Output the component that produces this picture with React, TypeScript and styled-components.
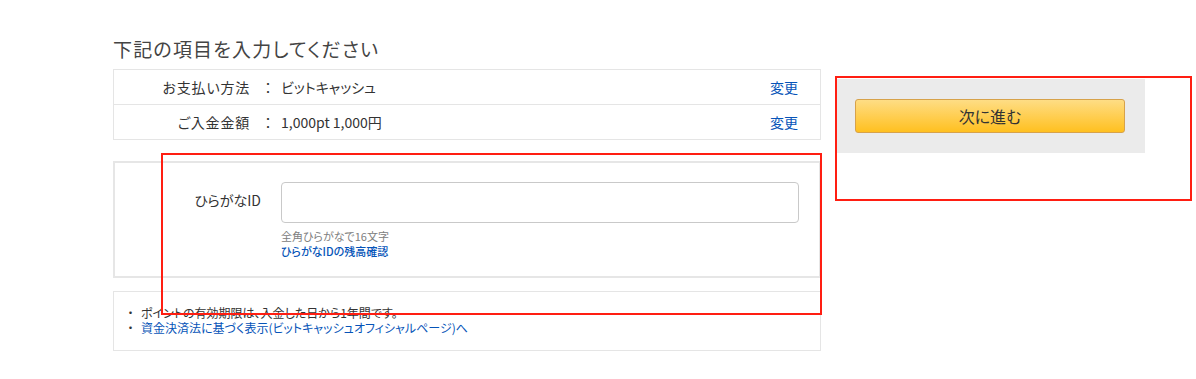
import React from "react";
import styled, { createGlobalStyle } from "styled-components";

const GlobalStyle = createGlobalStyle`
  html, body { margin: 0; padding: 0; background: #fff; }
  body {
    font-family: "Noto Sans CJK JP", "Noto Sans", sans-serif;
    font-feature-settings: "palt";
    color: #333;
  }
`;

const Page = styled.div`
  position: relative;
  width: 1196px;
  height: 379px;
  padding: 37px 0 0 113px;
  box-sizing: border-box;
`;

const Title = styled.h1`
  margin: 0 0 8px 0;
  font-size: 19px;
  font-weight: 400;
  line-height: 24px;
  letter-spacing: 1.2px;
  color: #444;
`;

const Columns = styled.div`
  display: flex;
  align-items: flex-start;
  gap: 15px;
`;

const Main = styled.div`
  width: 708px;
  display: flex;
  flex-direction: column;
`;

const InfoTable = styled.div`
  border: 1px solid #e5e5e5;
  border-bottom: none;
`;

const InfoRow = styled.div`
  display: grid;
  grid-template-columns: 136px 31px 1fr auto;
  align-items: center;
  height: 34px;
  border-bottom: 1px solid #e5e5e5;
  font-size: 14px;
  padding-right: 22px;
`;

const InfoLabel = styled.div`
  text-align: right;
  letter-spacing: 0.8px;
`;

const Colon = styled.div`
  text-align: center;
  padding-left: 5px;
`;

const InfoValue = styled.div``;

const Link = styled.a<{ $size?: number; $weight?: number }>`
  color: #0654b8;
  text-decoration: none;
  font-size: ${(p) => p.$size ?? 14}px;
  font-weight: ${(p) => p.$weight ?? 400};
  cursor: pointer;
`;

const InputPanel = styled.div`
  margin-top: 21px;
  border: 2px solid #e6e6e6;
  padding: 19px 20px 17px 0;
  display: flex;
  gap: 20px;
`;

const FieldLabel = styled.div`
  width: 146px;
  text-align: right;
  font-size: 14px;
  line-height: 18px;
  padding-top: 9px;
`;

const FieldBody = styled.div`
  flex: 1;
  display: flex;
  flex-direction: column;
`;

const TextInput = styled.input`
  box-sizing: border-box;
  width: 100%;
  height: 41px;
  border: 1px solid #c9c9c9;
  border-radius: 4px;
  outline: none;
  margin: 0 0 6px;
`;

const Hint = styled.div`
  font-size: 11px;
  line-height: 15px;
  color: #808080;
`;

const SmallLink = styled.div`
  font-size: 11px;
  line-height: 15px;
`;

const NotesBox = styled.ul`
  margin: 13px 0 0;
  border: 1px solid #e5e5e5;
  padding: 13px 0 15px 10px;
  list-style: none;
  font-size: 12px;
  line-height: 15px;
`;

const Note = styled.li`
  display: flex;
  gap: 4px;
`;

const Bullet = styled.span`
  width: 13px;
  text-align: center;
  color: #333;
`;

const Side = styled.div`
  margin-top: 10px;
  width: 309px;
  background: #ebebeb;
  padding: 20px 20px 20px 19px;
  box-sizing: border-box;
`;

const NextButton = styled.button`
  width: 270px;
  height: 34px;
  border: 1px solid #d7a24a;
  border-radius: 3px;
  background: linear-gradient(to bottom, #fedd85 0%, #ffcd4d 55%, #ffc020 100%);
  font-family: inherit;
  font-feature-settings: "palt";
  font-size: 16px;
  color: #333;
  cursor: pointer;
  padding: 0;
`;

const Annotation = styled.div<{ $l: number; $t: number; $w: number; $h: number }>`
  position: absolute;
  left: ${(p) => p.$l}px;
  top: ${(p) => p.$t}px;
  width: ${(p) => p.$w}px;
  height: ${(p) => p.$h}px;
  border: 2px solid #ff1e12;
  box-sizing: border-box;
  pointer-events: none;
`;

export default function App() {
  return (
    <>
      <GlobalStyle />
      <Page>
        <Title>下記の項目を入力してください</Title>
        <Columns>
          <Main>
            <InfoTable>
              <InfoRow>
                <InfoLabel>お支払い方法</InfoLabel>
                <Colon>：</Colon>
                <InfoValue>ビットキャッシュ</InfoValue>
                <Link>変更</Link>
              </InfoRow>
              <InfoRow>
                <InfoLabel>ご入金金額</InfoLabel>
                <Colon>：</Colon>
                <InfoValue>1,000pt 1,000円</InfoValue>
                <Link>変更</Link>
              </InfoRow>
            </InfoTable>
            <InputPanel>
              <FieldLabel>ひらがなID</FieldLabel>
              <FieldBody>
                <TextInput type="text" />
                <Hint>全角ひらがなで16文字</Hint>
                <SmallLink>
                  <Link $size={11} $weight={500}>ひらがなIDの残高確認</Link>
                </SmallLink>
              </FieldBody>
            </InputPanel>
            <NotesBox>
              <Note>
                <Bullet>・</Bullet>
                <span>ポイントの有効期限は、入金した日から1年間です。</span>
              </Note>
              <Note>
                <Bullet>・</Bullet>
                <Link $size={12}>資金決済法に基づく表示(ビットキャッシュオフィシャルページ)へ</Link>
              </Note>
            </NotesBox>
          </Main>
          <Side>
            <NextButton>次に進む</NextButton>
          </Side>
        </Columns>
        <Annotation $l={161} $t={153} $w={661} $h={162} />
        <Annotation $l={835} $t={76} $w={357} $h={125} />
      </Page>
    </>
  );
}
